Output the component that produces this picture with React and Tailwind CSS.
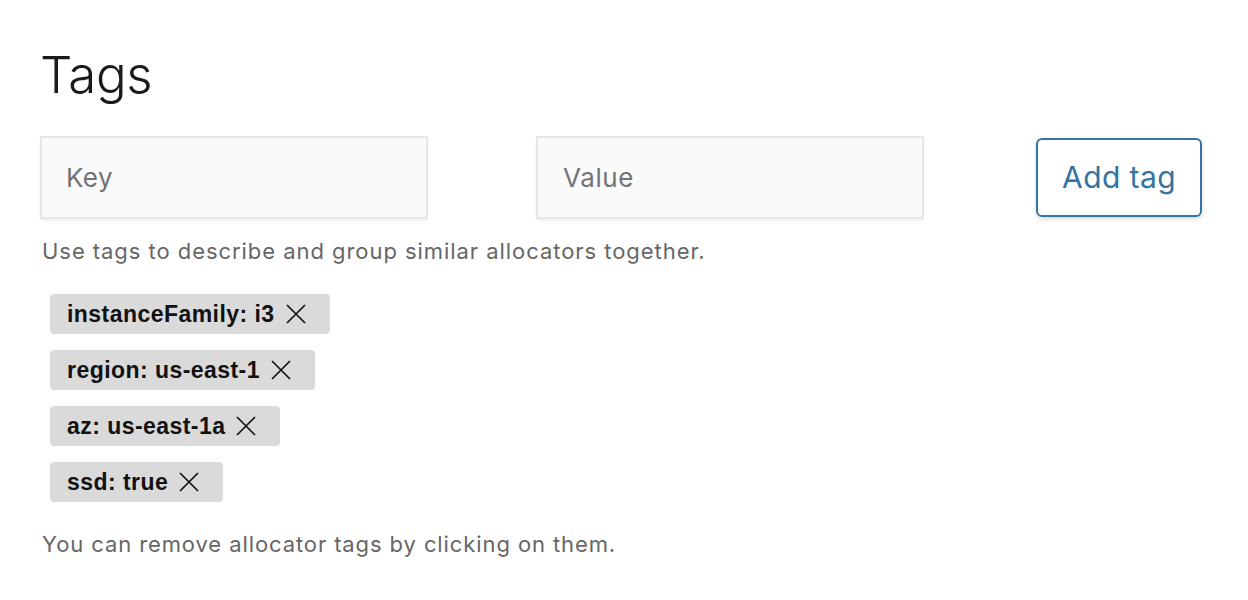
import React from "react";

const tags = ["instanceFamily: i3", "region: us-east-1", "az: us-east-1a", "ssd: true"];

function X() {
  return (
    <svg width="22" height="22" viewBox="0 0 22 22" className="ml-[10px]" fill="none" stroke="#111" strokeWidth="1.7">
      <path d="M2 2 L20 20 M20 2 L2 20" />
    </svg>
  );
}

export default function App() {
  return (
    <div className="min-h-[600px] bg-white pl-[40px] pt-[45px]" style={{ fontFamily: "Inter, 'Noto Sans', sans-serif" }}>
      <h1 className="text-[51px] leading-[60px] font-light text-[#1a1a1a] tracking-[-0.4px]">Tags</h1>
      <div className="mt-[31px] flex items-center">
        <div className="w-[388px] h-[83px] border-2 border-[#e6e6e6] bg-[#fafafa] shadow-[0_2px_3px_rgba(0,0,0,0.06)] flex items-center pl-[24px] text-[26px] tracking-[0.4px] text-[#737373]">Key</div>
        <div className="ml-[108px] w-[388px] h-[83px] border-2 border-[#e6e6e6] bg-[#fafafa] shadow-[0_2px_3px_rgba(0,0,0,0.06)] flex items-center pl-[25px] text-[26px] tracking-[0.6px] text-[#737373]">Value</div>
        <button className="ml-[112px] w-[166px] h-[79px] border-2 border-[#3573a0] rounded-[6px] bg-white text-[#3573a0] text-[30px] tracking-[0.4px] shadow-[0_2px_4px_rgba(0,0,0,0.15)]">Add tag</button>
      </div>
      <p className="mt-[16px] ml-[2px] text-[22px] leading-[32px] tracking-[0.95px] text-[#666]">Use tags to describe and group similar allocators together.</p>
      <div className="mt-[27px] flex flex-col items-start gap-[16px] pl-[10px]" style={{ fontFamily: "'Liberation Sans', Arial, sans-serif" }}>
        {tags.map((t) => (
          <div key={t} className="h-[40px] rounded-[4px] bg-[#dadada] flex items-center pl-[17px] pr-[23px] text-[23px] tracking-[0.45px] font-bold text-[#111]">
            {t}
            <X />
          </div>
        ))}
      </div>
      <p className="mt-[26px] ml-[2px] text-[22px] leading-[32px] tracking-[0.9px] text-[#666]">You can remove allocator tags by clicking on them.</p>
    </div>
  );
}
